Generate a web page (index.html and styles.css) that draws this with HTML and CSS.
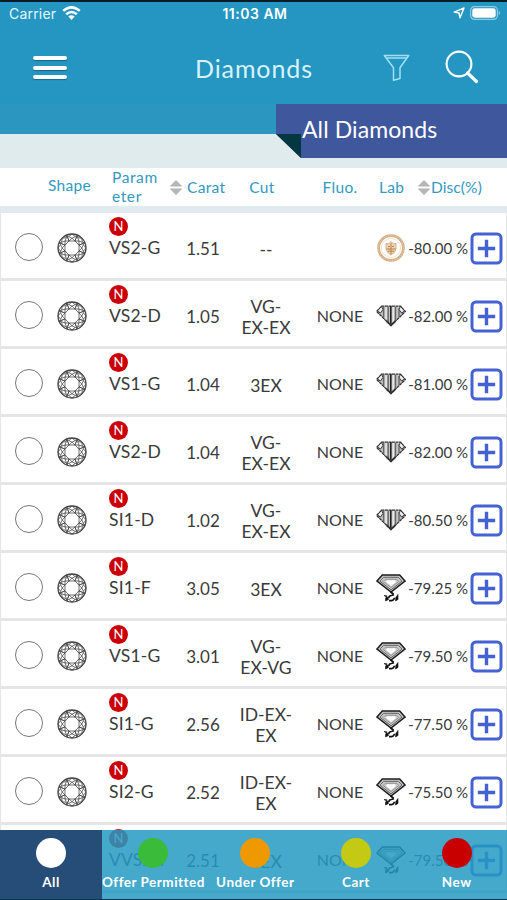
FILE: index.html
```html
<!DOCTYPE html>
<html lang="en">
<head>
<meta charset="utf-8">
<title>Diamonds</title>
<link rel="stylesheet" href="styles.css">
</head>
<body>
<svg class="defs" width="0" height="0">
  <symbol id="round" viewBox="-15 -15 30 30">
    <g fill="none" stroke="#444" stroke-width=".75">
      <circle r="14" stroke-width="1.3"/>
      <g id="q">
        <path id="f" d="M-2.9-7 0-9.8 2.9-7M0-9.8-3.3-11.4 0-13.8 3.3-11.4ZM3.3-11.4 5.4-12.7M-3.3-11.4-5.4-12.7M-2.9-7-5.4-12.7M2.9-7 5.4-12.7M-2.9-7H2.9"/>
        <use href="#f" transform="rotate(45)"/>
      </g>
      <use href="#q" transform="rotate(90)"/>
      <use href="#q" transform="rotate(180)"/>
      <use href="#q" transform="rotate(270)"/>
    </g>
  </symbol>
  <symbol id="seal" viewBox="0 0 30 30">
    <circle cx="15" cy="15" r="12.4" fill="#fff" stroke="#d5ad82" stroke-width="2.8"/>
    <circle cx="15" cy="15" r="12.4" fill="none" stroke="#ecd5bb" stroke-width="1" stroke-dasharray="1.2 1.2"/>
    <circle cx="15" cy="15" r="9.6" fill="none" stroke="#ead2b8" stroke-width=".7"/>
    <path d="M10 10.5 12.5 11 15 8.5 17.5 11 20 10.5V16Q19 20 15 22 11 20 10 16Z" fill="#ecd5b9" stroke="#cf9f6d" stroke-width=".8"/>
    <path d="M15 10V21M10.5 16H19.5M12 13.5H14M16 13.5H18M12 18.2H18" stroke="#bd8147" stroke-width="1"/>
  </symbol>
  <symbol id="striped" viewBox="0 0 30 30">
    <path d="M5.5 5.2H24.5L29.4 10.5 15 24.5.6 10.5Z" fill="#c4c4c4" stroke="#333" stroke-width="1.3" stroke-dasharray="3 .5"/>
    <path d="M1.4 10 5.5 5.4 7 8.5 4.5 12ZM28.6 10 24.5 5.4 23 8.5 25.5 12Z" fill="#eee" stroke="#333" stroke-width="1"/>
    <path d="M7.6 6V16.5M12.2 6V21M19.5 6V19.5M23 7V16" stroke="#666" stroke-width="1.4"/>
    <path d="M10 6V18.5M17.3 6V21" stroke="#f0f0f0" stroke-width="1.2"/>
    <path d="M14.8 5V23.5" stroke="#222" stroke-width="1.6"/>
    <path d="M10.5 20 15 24.3 19.5 20" fill="none" stroke="#333" stroke-width="1.8"/>
  </symbol>
  <symbol id="faceted" viewBox="0 0 30 30">
    <path d="M6.3 2H23.7L29 8 15 19 1 8Z" fill="#c9c9c9" stroke="#1c1c1c" stroke-width="1.5"/>
    <path d="M7.6 4.3H22.4L26 8.2 15 16.8 4 8.2Z" fill="none" stroke="#555" stroke-width=".9"/>
    <path d="M9.2 6.3H20.8L22.8 8.5 15 14.6 7.2 8.5Z" fill="none" stroke="#888" stroke-width=".8"/>
    <path d="M11 7.3H19L20 9 15 13 10 9Z" fill="#fff"/>
    <path d="M14.5 18.8 17.5 21.2" fill="none" stroke="#111" stroke-width="1.8"/>
    <path d="M8 22.5 11 22.8 9.5 25.5V28L12.5 26.5 12 24.2 10.5 24ZM22 21.5V26.5L19.5 28 19.8 24.5Z" fill="#111" stroke="#111" stroke-width=".6"/>
    <path d="M12.8 25Q13 22.5 15.4 22.5L18 21.8M13 27.6H15.5Q18.2 27.2 18.3 24.8" fill="none" stroke="#111" stroke-width="1.6"/>
  </symbol>
  <symbol id="sort" viewBox="0 0 14 15"><path d="M7 0 13.5 6.5H.5ZM.5 8.5H13.5L7 15Z" fill="#b5b5b5"/></symbol>
  <symbol id="plus" viewBox="0 0 33 33">
    <rect x="2" y="2" width="29" height="29" rx="4" fill="#fff" stroke="#4562d3" stroke-width="3"/>
    <path d="M16.5 7.8V25.2M7.8 16.5H25.2" stroke="#4562d3" stroke-width="3.4"/>
  </symbol>
</svg>
<div class="screen">
  <div class="status">
    <div class="carrier"><span>Carrier</span>
      <svg width="19" height="14" viewBox="0 0 19 14"><g fill="none" stroke="#fff" stroke-width="2.5"><path d="M1.2 4.9Q9.5-2.2 17.8 4.9"/><path d="M4.2 8.2Q9.5 3.7 14.8 8.2"/></g><path d="M6.3 10.6Q9.5 8.1 12.7 10.6L9.5 13.9Z" fill="#fff"/></svg>
    </div>
    <div class="clock">11:03 AM</div>
    <div class="battery">
      <svg class="arrow" width="12" height="12" viewBox="0 0 12 12"><path d="M11 1 1.2 5.1 6 6 7 10.8Z" fill="none" stroke="#fff" stroke-width="1.4" stroke-linejoin="round"/></svg>
      <svg width="31" height="14" viewBox="0 0 31 14"><rect x=".6" y=".6" width="26.8" height="12.8" rx="3.8" fill="none" stroke="#8fcbe2" stroke-width="1.2"/><rect x="2.3" y="2.3" width="23.4" height="9.4" rx="2.4" fill="#fff"/><path d="M28.7 4.8Q31.4 7 28.7 9.2Z" fill="#8fcbe2"/></svg>
    </div>
  </div>
  <header class="nav">
    <div class="menu"><i></i><i></i><i></i></div>
    <h1>Diamonds</h1>
    <svg class="filter" width="27" height="28" viewBox="0 0 27 28"><path d="M1.3 1.5H25.7L17 13.8V24.6L10.5 26.3V13.8ZM3 4H24" fill="none" stroke="#a2dff2" stroke-width="1.5" stroke-linejoin="round"/></svg>
    <svg class="search" width="34" height="34" viewBox="0 0 34 34"><g fill="none" stroke="#fff"><circle cx="14" cy="14" r="12.4" stroke-width="2.1"/><path d="M22.5 23 31.5 31.5" stroke-width="3.2" stroke-linecap="round"/></g></svg>
  </header>
  <div class="band"><div class="ribbon">All Diamonds</div></div>
  <div class="thead grid">
    <span></span><span class="h-shape">Shape</span><span class="h-param">Param<br>eter</span>
    <span class="h-carat"><svg width="14" height="15"><use href="#sort"/></svg>Carat</span>
    <span class="h-cut">Cut</span><span>Fluo.</span><span>Lab</span>
    <span class="h-disc"><svg width="14" height="15"><use href="#sort"/></svg>Disc(%)</span>
  </div>
  <main id="rows"></main>
  <footer class="tabs">
    <div class="tab active"><i class="white"></i>All</div>
    <div class="tab"><i class="green"></i>Offer Permitted</div>
    <div class="tab"><i class="orange"></i>Under Offer</div>
    <div class="tab"><i class="yellow"></i>Cart</div>
    <div class="tab"><i class="red"></i>New</div>
  </footer>
</div>
<script src="script.js"></script>
</body>
</html>
```
FILE: styles.css
```css
* { box-sizing: border-box; }
body { margin: 0; font-family: Lato, "Open Sans", sans-serif; color: #3a3a3a; background: #fff; }
.defs { position: absolute; }
.screen { position: relative; width: 507px; height: 900px; overflow: hidden; border-top: 2px solid #061b24; }
.status { height: 26px; display: grid; grid-template-columns: 1fr auto 1fr; align-items: center; padding: 0 6px 4px 9px; background: #2496c1; color: #fff; font-family: Inter, Roboto, sans-serif; font-size: 14px; }
.carrier { display: flex; align-items: center; gap: 6px; letter-spacing: .2px; color: #e6f6fb; }
.clock { font-weight: 600; font-size: 14px; letter-spacing: .5px; }
.battery { display: flex; align-items: center; justify-content: flex-end; gap: 5px; }
.nav { height: 76px; display: flex; align-items: center; background: #2496c1; padding: 0 28px 0 33px; }
.menu { width: 34px; display: flex; flex-direction: column; gap: 5.5px; margin-top: 3px; }
.menu i { height: 4px; border-radius: 2px; background: #fff; box-shadow: 0 1px 1px #176787; }
h1 { margin: 3px 0 0 128px; width: 120px; font-weight: 400; font-size: 25px; line-height: 30px; letter-spacing: .9px; color: #d9f2fa; white-space: nowrap; }
.filter { margin: 4px 0 0 68px; }
.search { margin: 2px 0 0 auto; }
.band { height: 64px; display: flex; justify-content: flex-end; align-items: flex-start; background: linear-gradient(#2b96bf 0 30px, #dfebed 30px); }
.ribbon { width: 231px; height: 54px; padding: 0 0 3px 26px; line-height: 51px; font-size: 23px; letter-spacing: .1px; color: #fff; background: #3f579c; clip-path: polygon(0 0, 100% 0, 100% 100%, 25px 100%, 0 30px); background-image: linear-gradient(#043740, #043740); background-size: 25px 24px; background-position: 0 30px; background-repeat: no-repeat; white-space: nowrap; }
.grid { display: grid; grid-template-columns: 57px 51px 70px 50px 76px 72px 31px 61px 39px; align-items: center; }
.thead { height: 45px; padding-bottom: 1px; border-bottom: 7px solid #dfebed; color: #3399c1; font-size: 15.5px; line-height: 19px; text-align: center; white-space: nowrap; letter-spacing: .3px; }
.thead svg { flex: none; }
.h-shape { margin: -4px 0 0 -9px; text-align: left; }
.h-param { text-align: left; padding-left: 4px; letter-spacing: .6px; }
.h-carat { display: flex; align-items: center; gap: 4px; margin-left: -9px; }
.h-cut { padding-right: 8px; }
.h-disc { display: flex; align-items: center; margin-left: 10px; letter-spacing: .1px; }
.row { height: 68px; border-bottom: 3px solid #e5e5e5; border-left: 1px solid #e6e6e6; border-right: 1px solid #e6e6e6; padding-top: 5px; text-align: center; font-size: 17.5px; line-height: 21px; }
.row.grid { grid-template-columns: 56px 51px 70px 50px 76px 72px 31px 61px 38px; }
.check { width: 28px; height: 28px; margin: -3px 0 0 14px; border: 1px solid #777; border-radius: 50%; }
.shape { display: block; }
.param { text-align: left; padding-left: 1px; margin: -5px 0 17px; white-space: nowrap; font-size: 17.5px; line-height: 20px; letter-spacing: .2px; }
.badge { display: block; width: 19px; height: 19px; margin-bottom: 2px; border-radius: 50%; background: #cb0008; color: #fff; font-size: 13px; font-weight: 400; line-height: 19px; text-align: center; letter-spacing: 0; }
.carat { font-size: 17px; }
.cut { margin-top: 2px; }
.fluo { font-size: 16px; margin-top: -2px; }
.disc { font-size: 15px; text-align: right; white-space: nowrap; }
.row .plus { margin-left: 2px; display: block; }
.tabs { position: absolute; left: 0; right: 0; bottom: 0; height: 70px; display: grid; grid-template-columns: 102px repeat(4, 1fr); background: rgba(37, 154, 195, .85); border-bottom: 1px solid #06354a; }
.tab { display: flex; flex-direction: column; align-items: center; padding-top: 8px; color: #fff; font-size: 13.5px; font-weight: 700; line-height: 16px; letter-spacing: .5px; white-space: nowrap; }
.tab i { width: 30px; height: 30px; border-radius: 50%; margin-bottom: 6px; }
.active { background: #264d77; }
.white { background: #fff; }
.green { background: #3abb3a; }
.orange { background: #ee9900; }
.yellow { background: #c4c914; }
.red { background: #c90000; }
```
FILE: script.js
```js
const data = [
  ["VS2-G", "1.51", "--", "", "seal", "-80.00 %"],
  ["VS2-D", "1.05", "VG-<br>EX-EX", "NONE", "striped", "-82.00 %"],
  ["VS1-G", "1.04", "3EX", "NONE", "striped", "-81.00 %"],
  ["VS2-D", "1.04", "VG-<br>EX-EX", "NONE", "striped", "-82.00 %"],
  ["SI1-D", "1.02", "VG-<br>EX-EX", "NONE", "striped", "-80.50 %"],
  ["SI1-F", "3.05", "3EX", "NONE", "faceted", "-79.25 %"],
  ["VS1-G", "3.01", "VG-<br>EX-VG", "NONE", "faceted", "-79.50 %"],
  ["SI1-G", "2.56", "ID-EX-<br>EX", "NONE", "faceted", "-77.50 %"],
  ["SI2-G", "2.52", "ID-EX-<br>EX", "NONE", "faceted", "-75.50 %"],
  ["VVS2-I", "2.51", "3EX", "NONE", "faceted", "-79.50 %"]
];
document.getElementById("rows").innerHTML = data.map(([param, carat, cut, fluo, lab, disc]) => `
  <div class="row grid">
    <span class="check"></span>
    <svg class="shape" width="30" height="30"><use href="#round"/></svg>
    <span class="param"><b class="badge">N</b>${param}</span>
    <span class="carat">${carat}</span>
    <span class="cut">${cut}</span>
    <span class="fluo">${fluo}</span>
    <svg class="lab" width="30" height="30"><use href="#${lab}"/></svg>
    <span class="disc">${disc}</span>
    <svg class="plus" width="33" height="33"><use href="#plus"/></svg>
  </div>`).join("");
```
